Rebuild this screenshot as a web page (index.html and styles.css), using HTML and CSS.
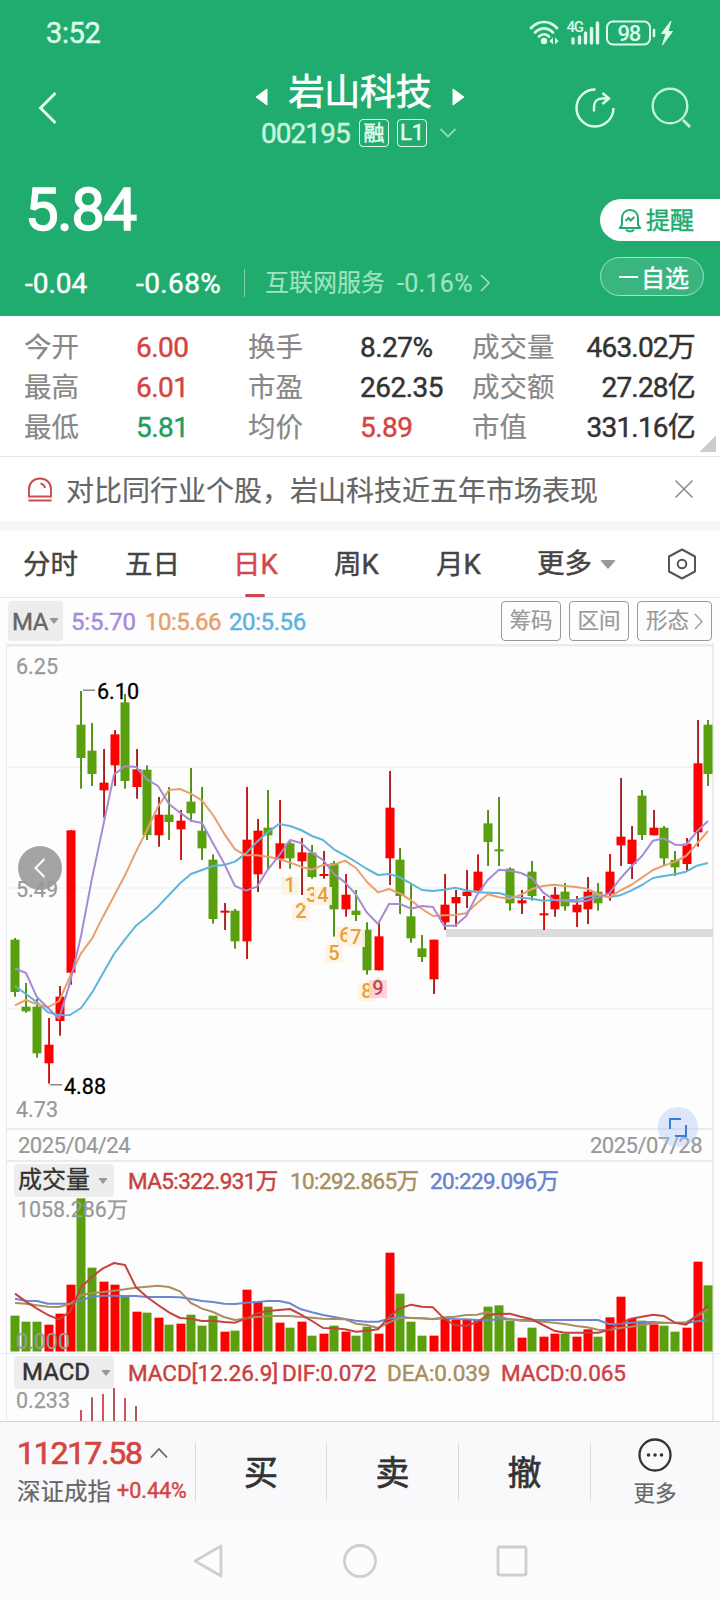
FILE: index.html
```html
<!DOCTYPE html>
<html lang="zh-CN">
<head>
<meta charset="utf-8">
<title>岩山科技 002195</title>
<link rel="stylesheet" href="styles.css">
</head>
<body>
<header class="header">
  <div class="status">
    <span class="clock">3:52</span>
    <svg class="status-icons" width="150" height="28" viewBox="0 0 150 28">
      <g fill="none" stroke="#dcfbea" stroke-width="2.7" stroke-linecap="round">
        <path d="M2 9C9.500 1 20.500 1 28 9M6 13.500c5.500-5.500 12.500-5.500 18 0M10 17.500c3-3 7-3 10 0"/>
        <g stroke-width="3.400"><path d="M44 20v4M50.500 18v6M56.500 14V24M62.500 9.500V24M68.500 4v20"/></g>
      </g>
      <circle cx="15" cy="22" r="3.200" fill="#dcfbea"/>
      <path d="M24 18.500v7l-3.500-3.500zM26 18.500v7l3.500-3.500z" fill="#dcfbea"/>
      <text x="37.500" y="13" class="net">4G</text>
      <rect x="78" y="2.500" width="43" height="23" rx="6" fill="none" stroke="#dcfbea" stroke-width="2"/>
      <text x="88.500" y="21.800" class="batt">98</text>
      <path d="M125 11v6" stroke="#dcfbea" stroke-width="2.600" stroke-linecap="round"/>
      <path d="M142 2l-9.500 12.500h4.500l-3.500 11.500 10-13.500h-4.500z" fill="#dcfbea" stroke="#dcfbea"/>
    </svg>
  </div>
  <div class="navbar">
    <svg class="back" width="20" height="34" viewBox="0 0 20 34"><path d="M17.500 2L2.500 17l15 15" fill="none" stroke="#e9fff4" stroke-width="2.800"/></svg>
    <div class="stock">
      <div class="stock-name">
        <svg width="12" height="18" viewBox="0 0 12 18"><path d="M12 1v16L1 9z" fill="#fff" stroke="#fff" stroke-linejoin="round"/></svg>
        <span>岩山科技</span>
        <svg width="12" height="18" viewBox="0 0 12 18"><path d="M0 1v16L11 9z" fill="#fff" stroke="#fff" stroke-linejoin="round"/></svg>
      </div>
      <div class="stock-code">
        <span class="code">002195</span><span class="mark">融</span><span class="mark lv">L1</span>
        <svg width="18" height="12" viewBox="0 0 18 12"><path d="M1.500 2L9 9.500 16.500 2" fill="none" stroke="#90dcb7" stroke-width="1.800"/></svg>
      </div>
    </div>
    <svg class="share" width="42" height="42" viewBox="0 0 42 42" fill="none" stroke="#dcfbea" stroke-width="2.400"><path d="M21.500 2.500A18.500 18.500 0 1 0 39.500 21"/><path d="M20 24.500v-4.500c0-5 3-8.500 8-8.500h7M28.500 6l6.500 5.500-6.500 5.500"/></svg>
    <svg class="search" width="42" height="42" viewBox="0 0 42 42" fill="none" stroke="#bff3d9" stroke-width="2.400"><circle cx="20" cy="19" r="17.300"/><path d="M33 33l7 7" stroke-width="3"/></svg>
  </div>
  <div class="quote">
    <div class="quote-main">
      <div class="price">5.84</div>
      <div class="change">
        <span class="diff">-0.04</span><span class="pct">-0.68%</span>
        <span class="sector">互联网服务</span><span class="sector-pct">-0.16%</span>
        <svg width="10" height="18" viewBox="0 0 10 18"><path d="M1 1l8 8-8 8" fill="none" stroke="#9fe3c2" stroke-width="1.600"/></svg>
      </div>
    </div>
    <div class="actions">
      <div class="remind">
        <svg width="24" height="25" viewBox="0 0 24 25" fill="none" stroke="#21ac6f" stroke-width="2"><path d="M4 17V10.500c0-5 3-8.500 8-8.500s8 3.500 8 8.500V17l2.300 3H1.700z" stroke-linejoin="round"/><path d="M8 21.500c1.500 2.500 6.500 2.500 8 0M7.500 13l3-3 2 2.500 4-3.500"/></svg>
        <span>提醒</span>
      </div>
      <div class="fav"><i class="minus"></i><span>自选</span></div>
    </div>
  </div>
</header>

<section class="stats">
  <span class="k">今开</span><span class="v up">6.00</span><span class="k">换手</span><span class="v">8.27%</span><span class="k">成交量</span><span class="v end">463.02万</span>
  <span class="k">最高</span><span class="v up">6.01</span><span class="k">市盈</span><span class="v">262.35</span><span class="k">成交额</span><span class="v end">27.28亿</span>
  <span class="k">最低</span><span class="v down">5.81</span><span class="k">均价</span><span class="v up">5.89</span><span class="k">市值</span><span class="v end">331.16亿</span>
  <i class="corner"></i>
</section>

<section class="notice">
  <svg width="24" height="25" viewBox="0 0 24 25" fill="none" stroke="#cc4a50" stroke-width="1.900"><path d="M1 19.500V12C1 6 5.500 1.500 12 1.500S23 6 23 12v7.500zM.5 23.500h23"/><path d="M12.500 6.500c2.500.5 4 2 4.500 4.500"/></svg>
  <span>对比同行业个股，岩山科技近五年市场表现</span>
  <svg class="close" width="18" height="18" viewBox="0 0 18 18"><path d="M.5.5l17 17M17.500.5l-17 17" stroke="#888" stroke-width="1.500"/></svg>
</section>

<nav class="tabs">
  <span>分时</span><span>五日</span><span class="active">日K</span><span>周K</span><span>月K</span>
  <span class="more">更多<i class="caret"></i></span>
  <svg width="30" height="32" viewBox="0 0 30 32" fill="none" stroke="#555" stroke-width="2"><path d="M15 1.500l13 7v15l-13 7-13-7v-15z" stroke-linejoin="round"/><circle cx="15" cy="16" r="4.300"/></svg>
</nav>

<div class="ma-bar">
  <span class="ma-tag">MA<i class="caret"></i></span>
  <span class="ma5">5:5.70</span><span class="ma10">10:5.66</span><span class="ma20">20:5.56</span>
  <span class="tool first">筹码</span><span class="tool">区间</span>
  <span class="tool wide">形态<svg width="9" height="17" viewBox="0 0 9 17"><path d="M1 1l7 7.500L1 16" fill="none" stroke="#999" stroke-width="1.300"/></svg></span>
</div>

<main class="charts">
  <div class="kline">
    <svg id="kline" width="720" height="485" viewBox="0 3 720 485"></svg>
    <svg class="expand" width="40" height="40" viewBox="0 0 40 40"><circle cx="20" cy="20" r="20" fill="#a9c6fb" fill-opacity=".4"/><path d="M12 22V12h11M28 18v11H17" fill="none" stroke="#3d7bd6" stroke-width="2"/></svg>
  </div>
  <div class="dates"><span>2025/04/24</span><span>2025/07/28</span></div>
  <div class="indicator">
    <span class="ind-tag">成交量<i class="caret"></i></span>
    <span class="c-red">MA5:322.931万</span><span class="c-brown">10:292.865万</span><span class="c-blue">20:229.096万</span>
  </div>
  <svg id="volume" width="720" height="156" viewBox="0 77 720 156"></svg>
  <div class="indicator macd">
    <span class="ind-tag">MACD<i class="caret"></i></span>
    <span class="c-red m1">MACD[12.26.9]</span><span class="c-red m2">DIF:0.072</span><span class="c-brown m3">DEA:0.039</span><span class="c-rose m4">MACD:0.065</span>
  </div>
  <svg id="macd" width="720" height="32" viewBox="0 269 720 32"></svg>
</main>

<footer class="trade">
  <div class="index">
    <div class="index-val"><span>11217.58</span><svg width="18" height="12" viewBox="0 0 18 12"><path d="M1 10.500L9 2l8 8.500" fill="none" stroke="#666" stroke-width="1.800"/></svg></div>
    <div class="index-name"><span>深证成指</span><b>+0.44%</b></div>
  </div>
  <div class="act">买</div><div class="act">卖</div><div class="act">撤</div>
  <div class="act-more">
    <svg width="36" height="36" viewBox="0 0 36 36"><circle cx="18" cy="18" r="15.500" fill="none" stroke="#333" stroke-width="2.300"/><g fill="#333"><circle cx="11.500" cy="18" r="1.800"/><circle cx="18" cy="18" r="1.800"/><circle cx="24.500" cy="18" r="1.800"/></g></svg>
    <span>更多</span>
  </div>
</footer>
<div class="sysnav">
  <svg width="32" height="36" viewBox="0 0 32 36"><path d="M29 3v30L3 18z"/></svg>
  <svg width="36" height="36" viewBox="0 0 36 36"><circle cx="18" cy="18" r="15.500"/></svg>
  <svg width="32" height="32" viewBox="0 0 32 32"><rect x="2" y="2" width="28" height="28" rx="1.500"/></svg>
</div>
<script src="chart.js"></script>
</body>
</html>
```
FILE: styles.css
```css
* { box-sizing: border-box; }
body {
  margin: 0;
  width: 720px;
  height: 1600px;
  overflow: hidden;
  background: #fdfdfd;
  font-family: Roboto, "Noto Sans CJK SC", sans-serif;
  color: #333;
  white-space: nowrap;
}
svg { display: block; flex: none; overflow: visible; }
i { font-style: normal; }

/* Half-step weight between regular and medium */
.clock, .stock-name, .code, .mark, .change, .remind, .fav, .v, .tabs, .ma-bar, .indicator, .index-val, .index-name b, .act { -webkit-text-stroke: .45px currentColor; }
.k, .notice, .dates, .index-name, .act-more { -webkit-text-stroke: .2px currentColor; }

.header { height: 316px; background: #21ac6f; color: #fff; }
.status { height: 64px; padding: 0 43px 0 46px; display: flex; justify-content: space-between; align-items: center; }
.clock { font-size: 29px; letter-spacing: -.4px; color: #dcfbea; padding-top: 2px; }
.status-icons { margin: 2px -2px 0 0; }
.net { font: 500 15px Roboto, sans-serif; letter-spacing: -1.2px; fill: #dcfbea; }
.batt { font: 500 22px Roboto, sans-serif; letter-spacing: -1.2px; fill: #dcfbea; }

.navbar { height: 92px; display: grid; grid-template-columns: 217px 284px 75px 74px; padding-left: 38px; align-items: start; }
.back { margin-top: 27px; }
.stock { padding-top: 5px; }
.stock-name { height: 46px; display: flex; align-items: center; justify-content: space-between; font-size: 36px; line-height: 46px; width: 210px; letter-spacing: -.3px; -webkit-text-stroke-width: .7px; }
.stock-name svg { margin-top: 9px; }
.stock-name span { margin-top: 2px; }
.stock-code { height: 36px; display: flex; align-items: center; padding-left: 6px; }
.code { width: 98px; font-size: 28px; letter-spacing: -.95px; color: #c9f6df; }
.mark { width: 30px; height: 28px; border: 1.500px solid #dcfbea; border-radius: 4px; font-size: 21px; line-height: 26px; text-align: center; margin-right: 8px; color: #e6fff2; }
.mark.lv { font-size: 22px; line-height: 25px; margin-right: 12px; }
.share { margin: 23px 0 0 35px; }
.search { margin: 23px 0 0 36px; }

.quote { height: 160px; display: flex; justify-content: space-between; }
.quote-main { padding-left: 25px; }
.price { font-size: 60px; line-height: 70px; padding-top: 19px; letter-spacing: -1.6px; -webkit-text-stroke: 1.5px currentColor; }
.change { height: 40px; margin-top: 18px; display: flex; align-items: center; font-size: 28px; }
.diff { width: 111px; }
.pct { width: 108px; letter-spacing: .4px; }
.sector { border-left: 1px solid #7bd0a8; height: 28px; line-height: 28px; padding-left: 20px; width: 153px; font-size: 24px; color: #9fe3c2; -webkit-text-stroke-width: .2px; }
.sector-pct { width: 83px; font-size: 25px; color: #9fe3c2; letter-spacing: .3px; -webkit-text-stroke-width: .2px; }
.actions { width: 120px; padding-top: 43px; }
.remind { height: 42px; border-radius: 21px 0 0 21px; background: #fff; color: #21ac6f; display: flex; align-items: center; padding-left: 18px; gap: 4px; font-size: 24px; }
.remind span { line-height: 40px; padding-top: 1px; }
.fav { width: 104px; height: 39px; margin-top: 16px; border: 1px solid #9fe3c2; border-radius: 20px; background: #3ab57f; display: flex; align-items: center; padding-left: 18px; gap: 3px; font-size: 24px; }
.minus { width: 19px; height: 2px; background: #fff; }

.stats { position: relative; height: 141px; border-bottom: 1px solid #e6e6e6; padding: 11px 25px 0 24px; display: grid; grid-template-columns: 112px 112px 112px 112px 84px 1fr; grid-auto-rows: 40px; align-items: center; line-height: 40px; background: #fff; }
.k { font-size: 27.500px; color: #888; padding-top: 1px; }
.v { font-size: 28px; letter-spacing: -.5px; color: #333; padding-top: 2px; line-height: 38px; }
.v.end { text-align: right; justify-self: end; letter-spacing: -.8px; }
.stats .up { color: #d4453f; }
.stats .down { color: #1f9e62; }
.corner { position: absolute; right: 4px; bottom: 4px; width: 16px; height: 16px; background: linear-gradient(135deg, transparent 50%, #ccc 50%); }

.notice { height: 64px; padding: 0 27px 0 28px; display: flex; align-items: center; font-size: 28px; color: #666; background: #fff; }
.notice span { margin-left: 14px; }
.close { margin-left: auto; }

.tabs { height: 77px; border-top: 10px solid #f7f7f7; border-bottom: 1px solid #e6e6e6; padding-left: 23px; display: grid; grid-template-columns: 102px 108px 101px 102px 101px 130px 1fr; align-items: center; font-size: 27.500px; color: #444; background: #fff; }
.tabs span { position: relative; height: 66px; line-height: 68px; }
.tabs .active { color: #d3474e; }
.active::after { content: ""; position: absolute; left: 12px; bottom: 0; width: 20px; height: 3px; border-radius: 2px; background: #cc474e; }
.caret { display: inline-block; border: 5px solid transparent; border-top: 6px solid #999; border-bottom: 0; border-radius: 2px; }
.more { display: flex; align-items: center; gap: 8px; }
.more .caret { border-width: 9px 8px 0; }

.ma-bar { height: 45px; padding: 3px 8px 0; display: flex; align-items: flex-start; font-size: 24px; line-height: 42px; }
.ma-tag { width: 55px; height: 40px; border-radius: 4px; background: #ededed; color: #666; padding-left: 4px; margin-right: 8px; letter-spacing: -.5px; }
.ma-tag .caret { margin: 0 0 6px 1px; }
.ma5 { width: 74px; color: #a78bd8; letter-spacing: -.2px; }
.ma10 { width: 84px; color: #e8a06a; letter-spacing: -.5px; }
.ma20 { color: #5cb2e0; letter-spacing: -.4px; }
.tool { width: 60px; height: 40px; margin-left: 8px; border: 1.500px solid #999; border-radius: 4px; font-size: 21.500px; line-height: 38px; text-align: center; color: #999; -webkit-text-stroke-width: .2px; }
.tool.first { margin-left: auto; }
.tool.wide { width: 75px; display: flex; align-items: center; justify-content: center; gap: 5px; }

.charts { position: relative; height: 778px; background: linear-gradient(90deg, transparent 6px, #ebebeb 6px, #ebebeb 7.500px, transparent 7.500px, transparent 712.500px, #ebebeb 712.500px, #ebebeb 714px, transparent 714px); }
.kline { position: relative; }
.expand { position: absolute; left: 658px; bottom: -19px; }
.dates { height: 34px; margin: 0 7px; border-top: 2px solid #ebebeb; border-bottom: 2px solid #ebebeb; padding: 0 11px; display: flex; justify-content: space-between; font-size: 22px; line-height: 32px; color: #999; letter-spacing: -.5px; }
.indicator { height: 35px; padding: 2px 0 0 14px; display: flex; font-size: 22.500px; line-height: 35px; letter-spacing: -.6px; }
.ind-tag { width: 100px; height: 33px; border-radius: 4px; background: #ededed; padding-left: 4px; margin-right: 14px; display: flex; align-items: center; gap: 8px; font-size: 24px; letter-spacing: 0; -webkit-text-stroke-width: .3px; }
.indicator .c-red { width: 162px; }
.indicator .c-brown { width: 140px; }
.c-red { color: #c8413f; }
.c-brown { color: #a98e5c; }
.c-blue { color: #6a82cc; }
.c-rose { color: #d04048; }
.macd { height: 36px; border-top: 1px solid #ebebeb; letter-spacing: -.1px; }
.macd .ind-tag { padding-left: 8px; gap: 11px; -webkit-text-stroke-width: .5px; }
.indicator .m1 { width: 154px; letter-spacing: -.05px; }
.indicator .m2 { width: 105px; }
.indicator .m3 { width: 114px; }
.axis { font: 22px Roboto, "Noto Sans CJK SC", sans-serif; fill: #999; stroke: #999; stroke-width: .25px; }
.extreme { font: 22px Roboto, sans-serif; fill: #000; stroke: #000; stroke-width: .3px; }
.seq { font: 500 20px Roboto, sans-serif; text-anchor: middle; }

.trade { height: 100px; border-top: 1px solid #d4d4d4; background: #f9f9fc; display: grid; grid-template-columns: 195px 131px 132px 132px 1fr; }
.index { padding: 12px 0 0 17px; }
.index-val { height: 38px; display: flex; align-items: center; gap: 8px; font-size: 32px; color: #d4453f; letter-spacing: -1.200px; -webkit-text-stroke-width: .7px; }
.index-name { height: 36px; display: flex; align-items: center; gap: 6px; font-size: 23.500px; color: #666; }
.index-name b { font-size: 21.500px; font-weight: 400; color: #d4453f; }
.act, .act-more { border-image: linear-gradient(#f9f9fc 22px, #d9d9d9 22px, #d9d9d9 78px, #f9f9fc 78px) 1; border-style: solid; border-width: 0 0 0 1px; }
.act { display: grid; place-items: center; font-size: 34px; line-height: 40px; padding-top: 3px; -webkit-text-stroke-width: .7px; }
.act-more { display: flex; flex-direction: column; align-items: center; padding: 15px 1px 0 0; font-size: 21.500px; color: #666; }
.act-more span { line-height: 42px; }
.sysnav { height: 79px; background: #fcfcfc; display: flex; justify-content: center; align-items: center; gap: 118px; }
.sysnav svg { fill: none; stroke: #cfcfcf; stroke-width: 2.800px; stroke-linejoin: round; }
```
FILE: chart.js
```js
// Vertical values are stored in thirds of a pixel.
const UP = '#fd0000', DOWN = '#5aa00e';
const candles = [
  ['g',894,899,1056,1070],['g',1029,1100,1114,1118],['g',1077,1100,1240,1253],['r',1134,1214,1270,1331],
  ['r',1038,1070,1143,1187],['r',571,571,998,1034],['g',153,254,354,446],['g',249,332,402,438],
  ['r',327,428,451,533],['r',270,283,376,438],['g',162,187,423,446],['r',327,388,441,476],
  ['g',376,389,585,600],['r',471,524,586,620],['g',441,524,546,600],['r',510,542,568,660],
  ['g',384,485,520,545],['g',441,572,625,660],['g',643,659,837,851],['r',789,812,818,870],
  ['g',807,812,904,926],['r',441,599,904,957],['r',537,572,703,756],['g',450,563,586,688],
  ['r',480,610,656,686],['g',605,610,655,686],['r',594,637,664,765],['g',615,638,711,716],
  ['r',633,702,708,716],['g',663,670,808,890],['r',702,764,808,830],['g',750,812,825,843],
  ['g',847,869,991,1004],['r',850,889,991,991],['r',393,503,655,735],['g',624,659,768,822],
  ['g',733,829,895,908],['g',885,925,951,966],['r',899,899,1018,1062],['r',702,794,847,870],
  ['r',750,771,790,860],['r',690,755,768,804],['r',643,695,752,752],['g',510,550,606,678],
  ['g',471,628,634,678],['g',682,686,790,812],['r',750,781,790,822],['g',663,695,768,782],
  ['r',768,820,826,870],['r',741,764,808,830],['g',729,755,799,812],['r',768,794,817,861],
  ['r',711,755,808,852],['g',729,755,790,812],['r',642,695,761,782],['r',414,590,616,678],
  ['r',558,599,672,717],['g',450,467,585,600],['r',510,563,586,586],['g',558,563,655,675],
  ['g',633,660,682,708],['r',594,611,672,694],['r',240,370,577,620],['g',240,254,402,438]
];
const priceMA = {
  '#5fb4dd': [1038,1062,1087,1117,1126,1125,1104,1058,1000,942,898,857,830,800,765,730,702,690,678,675,665,640,605,576,552,558,570,588,600,628,646,666,687,705,702,712,731,750,753,749,743,751,757,758,759,769,773,776,782,780,780,780,771,764,772,766,752,735,714,708,703,695,677,669],
  '#e6a06c': [1096,1080,1093,1102,1083,1010,940,896,830,768,706,635,570,500,450,447,461,482,525,580,628,646,646,650,657,668,680,689,675,674,662,684,726,757,747,760,781,807,828,826,825,820,790,763,772,776,764,747,738,734,738,741,746,762,772,752,735,713,690,677,665,648,611,573],
  '#a68bd4': [985,999,1072,1104,1136,1028,888,715,560,404,378,381,418,438,492,518,542,549,610,670,738,752,740,688,647,600,609,638,660,702,727,764,818,852,792,792,806,798,801,857,857,829,765,719,689,692,699,714,757,780,783,785,782,772,761,717,680,648,602,595,614,615,574,543]
};
const volumes = [587,605,605,614,581,494,235,443,485,494,530,575,578,593,614,611,584,617,587,635,632,509,545,560,608,623,605,647,641,617,635,647,620,641,398,521,605,647,647,596,600,599,599,560,556,602,653,623,650,641,641,650,628,650,592,530,596,602,613,617,635,623,425,496];
const volumeMA = {
  '#6c86cf': [536,542,543,551,551,551,541,530,527,527,528,528,531,531,531,532,537,543,546,551,552,548,546,543,543,550,568,577,585,591,597,602,605,605,596,590,594,595,597,595,597,598,600,601,598,598,600,600,600,600,600,600,600,600,612,612,608,607,606,608,609,610,604,600],
  '#aa8e60': [549,551,556,560,561,552,526,519,516,512,508,503,500,497,501,514,549,566,576,591,600,595,591,588,588,588,591,593,596,597,598,611,615,624,607,594,594,595,598,592,590,585,584,576,590,598,602,603,605,608,612,618,622,629,630,624,620,615,610,608,608,607,588,568],
  '#c24440': [521,545,566,585,598,575,502,470,445,429,435,502,531,555,577,594,596,603,602,606,608,596,580,573,570,567,584,603,624,625,628,635,632,628,590,565,554,560,562,596,615,618,606,585,582,581,590,598,615,632,638,638,638,638,629,611,596,590,584,588,608,614,585,558]
};

const cx = i => 15 + 11 * i + (candles[i][0] === 'r' ? 1 : 0);
const line = (ys, color) =>
  `<polyline fill="none" stroke="${color}" stroke-width="2" stroke-linejoin="round" points="${ys.map((y, i) => `${15 + 11 * i},${y / 3}`).join(' ')}"/>`;
const bar = (x, y, w, y2, color) => `<rect x="${x}" y="${y}" width="${w}" height="${y2 - y}" fill="${color}"/>`;
const label = (x, y, len, text, cls = 'axis') =>
  `<text class="${cls}" x="${x}" y="${y}" textLength="${len}" lengthAdjust="spacingAndGlyphs">${text}</text>`;

// Price panel
let k = bar(6, 4, 708, 6.500, '#ebebeb');
for (const y of [127, 248, 369]) k += bar(7, y - 0.8, 706, y + 0.8, '#f2f2f2');
k += bar(446, 289, 267, 297, '#dcdcdc');
candles.forEach(([c, h, t, b, l], i) => {
  const x = cx(i);
  k += bar(x - 0.9, h / 3, 1.9, l / 3, c === 'r' ? (i % 3 ? '#a32020' : '#cc1111') : '#4f8f10');
  k += bar(x - 4.500, t / 3, 9, b / 3, c === 'r' ? UP : DOWN);
});
for (const [color, ys] of Object.entries(priceMA)) k += line(ys, color);
const marks = [[290,245,1],[301,271,2],[312,255,3],[323,255,4],[334,313,5],[345,295,6],[356,297,7],[367,351,8],[378,348,9]];
for (const [x, y, n] of marks) {
  const last = n === 9;
  k += `<path d="M${x - 9} ${y - 8}h6l3-3 3 3h6v18h-18z" fill="${last ? '#fbd3d6' : '#fef3e3'}" fill-opacity=".9"/>`;
  k += `<text class="seq" x="${x}" y="${y + 7}" fill="${last ? '#cf4148' : '#e6a03a'}">${n}</text>`;
}
k += `<circle cx="40" cy="228" r="22" fill="#8a8a8a" fill-opacity=".78"/><path d="M44.500 219l-9 9 9 9" fill="none" stroke="#fff" stroke-width="2"/>`;
k += label(16, 34, 42, '6.25') + label(16, 257, 42, '5.49') + label(16, 477, 42, '4.73');
k += bar(83, 49.500, 12, 51, '#888') + label(97, 59, 42, '6.10', 'extreme');
k += bar(50, 444, 12, 445.500, '#888') + label(64, 454, 42, '4.88', 'extreme');
document.getElementById('kline').innerHTML = k;

// Volume panel
let v = '';
volumes.forEach((t, i) => { v += bar(cx(i) - 4.500, t / 3, 9, 231.500, candles[i][0] === 'r' ? UP : DOWN); });
for (const [color, ys] of Object.entries(volumeMA)) v += line(ys, color);
v += label(17, 96.500, 111, '1058.286万') + label(16, 229, 54, '0.000');
document.getElementById('volume').innerHTML = v;

// MACD histogram
let m = label(16, 288, 54, '0.233');
[870, 832, 822, 804, 834, 858].forEach((t, i) => { m += bar(80.100 + 11 * i, t / 3, 1.8, 301, i % 2 ? '#a8474b' : '#cc4448'); });
document.getElementById('macd').innerHTML = m;
```
